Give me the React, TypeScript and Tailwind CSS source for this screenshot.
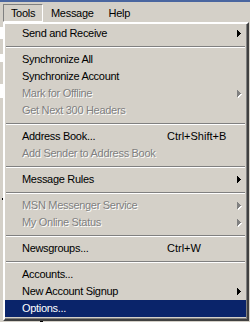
import React from 'react'

type Item =
  | { kind: 'sep' }
  | { kind: 'item'; label: string; shortcut?: string; submenu?: boolean; disabled?: boolean; active?: boolean }

const items: Item[] = [
  { kind: 'item', label: 'Send and Receive', submenu: true },
  { kind: 'sep' },
  { kind: 'item', label: 'Synchronize All' },
  { kind: 'item', label: 'Synchronize Account' },
  { kind: 'item', label: 'Mark for Offline', submenu: true, disabled: true },
  { kind: 'item', label: 'Get Next 300 Headers', disabled: true },
  { kind: 'sep' },
  { kind: 'item', label: 'Address Book...', shortcut: 'Ctrl+Shift+B' },
  { kind: 'item', label: 'Add Sender to Address Book', disabled: true },
  { kind: 'sep' },
  { kind: 'item', label: 'Message Rules', submenu: true },
  { kind: 'sep' },
  { kind: 'item', label: 'MSN Messenger Service', submenu: true, disabled: true },
  { kind: 'item', label: 'My Online Status', submenu: true, disabled: true },
  { kind: 'sep' },
  { kind: 'item', label: 'Newsgroups...', shortcut: 'Ctrl+W' },
  { kind: 'sep' },
  { kind: 'item', label: 'Accounts...' },
  { kind: 'item', label: 'New Account Signup', submenu: true },
  { kind: 'item', label: 'Options...', active: true },
]

const Arrow: React.FC<{ color: string; shadow?: boolean }> = ({ color, shadow }) => (
  <svg width="5" height="8" viewBox="0 0 5 8" shapeRendering="crispEdges" className="block">
    {shadow && (
      <g fill="#ffffff">
        <rect x="1" y="1" width="1" height="7" />
        <rect x="2" y="2" width="1" height="5" />
        <rect x="3" y="3" width="1" height="3" />
        <rect x="4" y="4" width="1" height="1" />
      </g>
    )}
    <g fill={color}>
      <rect x="0" y="0" width="1" height="7" />
      <rect x="1" y="1" width="1" height="5" />
      <rect x="2" y="2" width="1" height="3" />
      <rect x="3" y="3" width="1" height="1" />
    </g>
  </svg>
)

const MenuRow: React.FC<{ item: Extract<Item, { kind: 'item' }> }> = ({ item }) => {
  const text = item.active
    ? 'text-white'
    : item.disabled
      ? 'text-[#808080] [text-shadow:1px_1px_0_#ffffff]'
      : 'text-black'

  return (
    <div className={`relative flex h-[17px] items-center ${item.active ? 'bg-[#0a246a]' : ''}`}>
      <span className={`pl-[17px] leading-none whitespace-nowrap ${text}`}>{item.label}</span>
      {item.shortcut && (
        <span className={`absolute left-[162px] tracking-[0px] leading-none whitespace-nowrap ${text}`}>
          {item.shortcut}
        </span>
      )}
      {item.submenu && (
        <span className="absolute top-[5px] left-[232px]">
          <Arrow color={item.disabled ? '#808080' : '#000000'} shadow={item.disabled} />
        </span>
      )}
    </div>
  )
}

export default function App() {
  return (
    <div
      className="flex h-[322px] w-[250px] flex-col overflow-hidden bg-[#d4d0c8] text-[11px] tracking-[-0.3px] text-black"
      style={{ fontFamily: '"Liberation Sans", Arial, sans-serif' }}
    >
      {/* title bar edge */}
      <div className="h-[2px] bg-[#4a66a0]" />

      {/* menu bar */}
      <div className="flex h-[21px] items-start pt-[2px]">
        <div className="ml-[3px] flex h-[18px] w-[40px] items-center justify-center border border-t-[#808080] border-l-[#808080] border-r-white border-b-white">
          Tools
        </div>
        <div className="flex h-[18px] items-center pl-[8px]">Message</div>
        <div className="flex h-[18px] items-center pl-[15px]">Help</div>
      </div>

      <div className="flex">
        {/* window behind, left edge */}
        <div className="flex w-[3px] flex-col">
          <div className="h-[5px]" />
          <div className="h-[12px] bg-white" />
          <div className="h-[15px]" />
          <div className="h-[8px] bg-white" />
          <div className="h-[22px]" />
          <div className="h-[14px] bg-white" />
          <div className="h-[100px]" />
          <div className="ml-[2px] h-[2px] w-[1px] bg-black" />
        </div>

        {/* dropdown */}
        <div className="w-[246px] border-2 border-t-white border-l-white border-r-[#404040] border-b-[#404040] shadow-[inset_-1px_-1px_0_#808080]">
          <div className="pt-[1px] pr-[1px] pb-[2px]">
            {items.map((item, i) =>
              item.kind === 'sep' ? (
                <div key={i} className="flex h-[9px] flex-col justify-center px-[1px]">
                  <div className="h-px bg-[#808080]" />
                  <div className="h-px bg-white" />
                </div>
              ) : (
                <MenuRow key={i} item={item} />
              ),
            )}
          </div>
        </div>
      </div>

      <div className="flex h-[1px]">
        <div className="ml-[40px] h-[1px] w-[3px] bg-black" />
      </div>
    </div>
  )
}
